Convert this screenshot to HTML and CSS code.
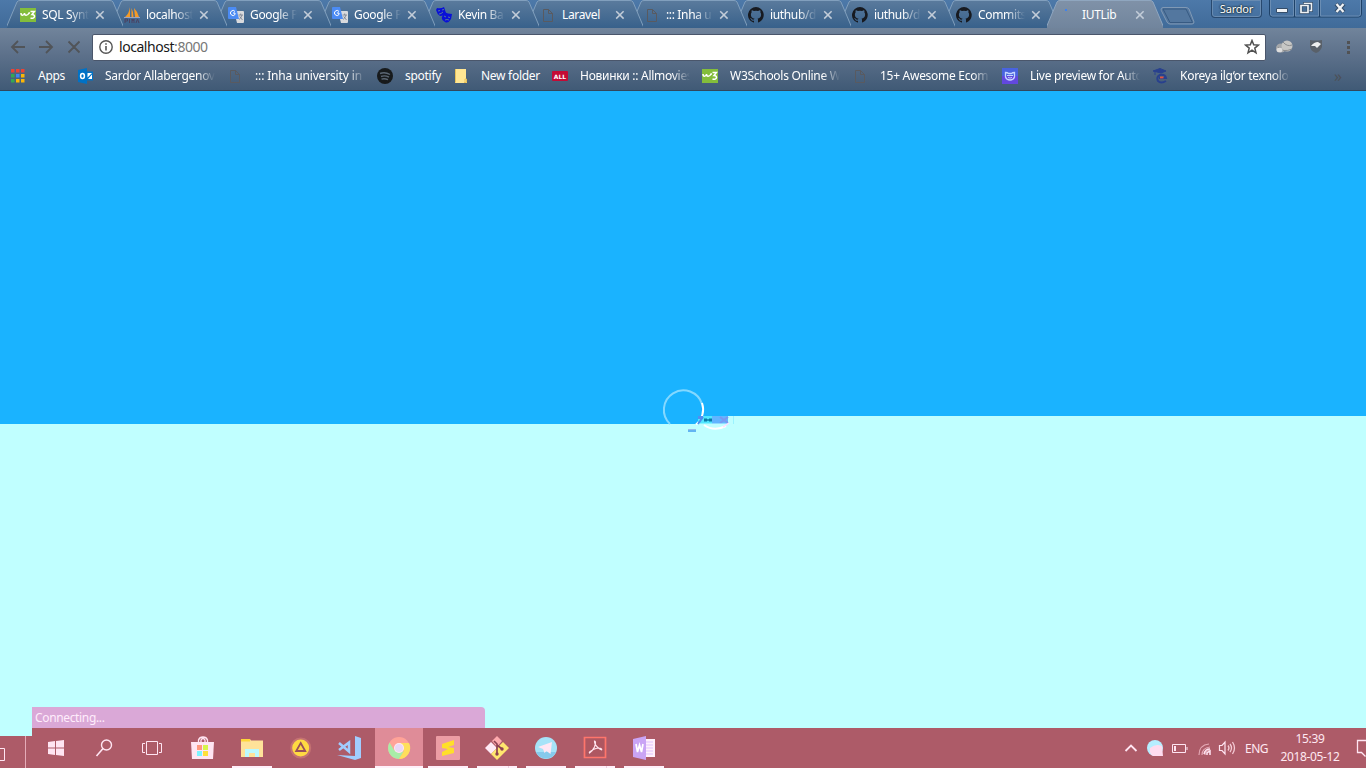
FILE: index.html
```html
<!DOCTYPE html>
<html lang="en">
<head>
<meta charset="utf-8">
<title>IUTLib</title>
<link rel="stylesheet" href="styles.css">
</head>
<body>
<svg class="defs" width="0" height="0">
  <symbol id="tab" viewBox="0 0 116 28"><path d="M-1 28L10 2Q11 0 13 0H103Q105 0 106 2L117 28Z" fill="url(#tabfill)"/><path d="M-1 28L10 2Q11 .5 13 .5H103Q105 .5 106 2L117 28" fill="none" stroke="#819fbd" stroke-width="1"/></symbol>
  <linearGradient id="tabfill" x2="0" y2="1"><stop stop-color="#5b7b9d"/><stop offset="1" stop-color="#38618b"/></linearGradient>
  <linearGradient id="activefill" x2="0" y2="1"><stop stop-color="#8092a8"/><stop offset="1" stop-color="#71859d"/></linearGradient>
  <symbol id="w3" viewBox="0 0 16 16"><path fill="#83bd3b" d="M0 1h16v14H0z"/><path d="M1 6c0 3 3 3 3.500 0c0 3 3 3 4.500 0H10M10.500 4.500h4L12 7.500c4 0 3 5-1.500 3.500" fill="none" stroke="#fff" stroke-width="1.500"/></symbol>
  <symbol id="page" viewBox="0 0 16 16"><path d="M3.500 2.500h5l4 4v8h-9zM8.500 2.500v4h4" fill="none" stroke="#595a60"/></symbol>
  <symbol id="translate" viewBox="0 0 16 16"><path d="M6 4h9q1 0 1 1v10q0 1-1 1H9z" fill="#d9dadd"/><path d="M1 0h7l3 12H1q-1 0-1-1V1q0-1 1-1z" fill="#4b8bf4"/><path d="M7 4.500A2.500 2.500 0 1 0 7 7.500V6H5" stroke="#fff" fill="none"/><path d="M10.500 8H15M12.700 6.500V8M14 8q-1 3.500-3 4.500M11.700 9.500l2.800 3.500" stroke="#737c8c" stroke-width=".8" fill="none"/></symbol>
  <symbol id="github" viewBox="0 0 16 16"><path fill="#171a20" d="M8 0a8 8 0 0 0-2.500 15.600c.4.100.500-.2.500-.4v-1.500c-2.200.5-2.700-1-2.700-1-.4-.9-.9-1.200-.9-1.200-.7-.5.100-.5.100-.5.800.1 1.200.8 1.200.8.700 1.200 1.900.9 2.300.7.100-.5.300-.9.500-1.100-1.800-.2-3.600-.9-3.600-4 0-.9.300-1.600.8-2.100-.1-.2-.4-1 .1-2.100 0 0 .7-.2 2.200.8a7.700 7.700 0 0 1 4 0c1.500-1 2.200-.8 2.200-.8.500 1.100.2 1.900.1 2.100.5.500.8 1.200.8 2.100 0 3.100-1.900 3.800-3.600 4 .3.300.5.800.5 1.500v2.200c0 .2.100.5.500.4A8 8 0 0 0 8 0z"/></symbol>
  <symbol id="x" viewBox="0 0 10 10"><path d="M1.200 1.200l7.400 7.400M8.600 1.200L1.200 8.600" stroke="#c2ccd8" stroke-width="1.500"/></symbol>
</svg>

<header class="tabstrip">
  <div class="tabs">
    <div class="tab"><svg class="shape"><use href="#tab"/></svg><svg class="fav"><use href="#w3"/></svg><span class="title">SQL Synt</span><svg class="close"><use href="#x"/></svg></div>
    <div class="tab"><svg class="shape"><use href="#tab"/></svg><svg class="fav" viewBox="0 0 16 16"><path d="M6 0v10H1Q5 7 6 0zM7.500 1q2 4 2 9h-2zM10 1q4 4 5 9h-4z" fill="#f49a27"/><path d="M0 10.500h16" stroke="#9ca4c0"/><path d="M1 16v-4h2.500v2H1M5.500 16v-4m2.500 4v-4l1 2 1-2v4m2 0 1.500-4 1.500 4" fill="none" stroke="#4a4262"/></svg><span class="title">localhost</span><svg class="close"><use href="#x"/></svg></div>
    <div class="tab"><svg class="shape"><use href="#tab"/></svg><svg class="fav"><use href="#translate"/></svg><span class="title">Google P</span><svg class="close"><use href="#x"/></svg></div>
    <div class="tab"><svg class="shape"><use href="#tab"/></svg><svg class="fav"><use href="#translate"/></svg><span class="title">Google P</span><svg class="close"><use href="#x"/></svg></div>
    <div class="tab"><svg class="shape"><use href="#tab"/></svg><svg class="fav" viewBox="0 0 16 16"><path d="M1 1q4 1 7-1l2 6q-2 3-6 3Q1 7 0 3z" fill="#0910d7"/><path d="M8 5q4 2 8 2l-1 5q-3 5-6 3-4-2-3-5z" fill="#0910d7"/><path d="M2 4l2-.5M6 3l2-.5M3 7q2 0 4-2M8 9l2 1M12 10l2 .5M9 13q2-1 4 0" stroke="#5375a0" fill="none"/></svg><span class="title">Kevin Ba</span><svg class="close"><use href="#x"/></svg></div>
    <div class="tab"><svg class="shape"><use href="#tab"/></svg><svg class="fav"><use href="#page"/></svg><span class="title full">Laravel</span><svg class="close"><use href="#x"/></svg></div>
    <div class="tab"><svg class="shape"><use href="#tab"/></svg><svg class="fav"><use href="#page"/></svg><span class="title">::: Inha u</span><svg class="close"><use href="#x"/></svg></div>
    <div class="tab"><svg class="shape"><use href="#tab"/></svg><svg class="fav"><use href="#github"/></svg><span class="title">iuthub/d</span><svg class="close"><use href="#x"/></svg></div>
    <div class="tab"><svg class="shape"><use href="#tab"/></svg><svg class="fav"><use href="#github"/></svg><span class="title">iuthub/d</span><svg class="close"><use href="#x"/></svg></div>
    <div class="tab"><svg class="shape"><use href="#tab"/></svg><svg class="fav"><use href="#github"/></svg><span class="title">Commits</span><svg class="close"><use href="#x"/></svg></div>
    <div class="tab active"><svg class="shape" viewBox="0 0 116 28"><path d="M-1 28L10 2Q11 0 13 0H103Q105 0 106 2L117 28Z" fill="url(#activefill)"/><path d="M-1 28L10 2Q11 .5 13 .5H103Q105 .5 106 2L117 28" fill="none" stroke="#8fa6bf"/></svg><svg class="fav" viewBox="0 0 16 16"><path d="M5 2h2v2H5z" fill="#3e82ed"/></svg><span class="title full">IUTLib</span><svg class="close"><use href="#x"/></svg></div>
  </div>
  <svg class="newtab" width="36" height="18" viewBox="0 0 36 18"><path d="M3 .5H26Q28 .5 29 2L34 15Q34 17 32 17H10Q8 17 7 15L1 3Q1 .5 3 .5Z" fill="#53779f" stroke="#8099b5"/><path d="M3 2H26L32.500 15.500H10Z" fill="none" stroke="#375a82"/></svg>
  <div class="user">Sardor</div>
  <div class="window-buttons">
    <svg width="97" height="18" viewBox="0 0 97 18"><path d="M.5 0v14q0 3 3 3h86q3 0 3-3V0M25.500 0v17M50.500 0v17" fill="none" stroke="#1e4269"/><path d="M1.500 0v14q0 2 2 2h21V0M26.500 0v16h23V0M51.500 0v16h38q2 0 2-2V0" fill="none" stroke="#6a8db3"/><path d="M7.500 8.500h11v4h-11z" fill="#eff2f5" stroke="#344d69"/><path d="M35.500 3.500h7v7h-7z" fill="none" stroke="#344d69" stroke-width="3"/><path d="M35.500 3.500h7v7h-7z" fill="none" stroke="#eff2f5" stroke-width="1.500"/><path d="M32 5.500h7v7h-7z" fill="#456d97" stroke="#344d69" stroke-width="3"/><path d="M32 5.500h7v7h-7z" fill="none" stroke="#eff2f5" stroke-width="1.700"/><path d="M67 4l8 8M75 4l-8 8" stroke="#344d69" stroke-width="4"/><path d="M67.500 4l7 8M74.500 4l-7 8" stroke="#eff2f5" stroke-width="2.300"/></svg>
  </div>
</header>

<section class="chrome">
  <div class="toolbar">
    <svg class="nav" width="83" height="20" viewBox="0 0 83 20"><path d="M25 10H12M18 4l-6 6 6 6M39 10h13M46 4l6 6-6 6M68.500 4.500l11 11M79.500 4.500l-11 11" fill="none" stroke="#515458" stroke-width="1.800"/></svg>
    <div class="address">
      <svg width="14" height="14" viewBox="0 0 14 14"><circle cx="7" cy="7" r="6.200" fill="none" stroke="#555" stroke-width="1.400"/><path d="M7 6v4.500M7 3.300v1.500" stroke="#555" stroke-width="1.600"/></svg>
      <span class="url">localhost<span class="port">:8000</span></span>
      <svg class="star" width="16" height="16" viewBox="0 0 16 16"><path d="M8 1.500l1.700 4.300 4.800.3-3.700 3 1.200 4.700L8 11.200l-4 2.600 1.200-4.700-3.700-3 4.800-.3z" fill="none" stroke="#505050" stroke-width="1.500"/></svg>
    </div>
    <svg class="extensions" width="100" height="20" viewBox="0 0 100 20"><ellipse cx="15" cy="11" rx="5" ry="4.500" fill="#a5a7aa"/><circle cx="21" cy="9" r="5.500" fill="#c7c7c5"/><path d="M12 10q5 6 14 2M17 5q4 5 9 3" fill="none" stroke="#8b8c8e"/><ellipse cx="13.500" cy="13" rx="3" ry="2.300" fill="#ddd"/><path d="M44 3q6 1 12 0v7q-2 5-6 6-6-2-6-7z" fill="#596069"/><path d="M45 9q3-4 7-4l3 2-4 4-2-2z" fill="#eee"/><path d="M81 4h3v3h-3zm0 5h3v3h-3zm0 5h3v3h-3z" fill="#515254"/></svg>
  </div>
  <nav class="bookmarks">
    <div class="bm apps"><svg viewBox="0 0 16 16"><path d="M1 1h3.500v3.500H1zm5 0h3.500v3.500H6zm5 0h3.500v3.500H11z" fill="#ea4335"/><path d="M1 6h3.500v3.500H1z" fill="#35a853"/><path d="M6 6h3.500v3.500H6z" fill="#4285f4"/><path d="M11 6h3.500v3.500H11zM6 11h3.500v3.500H6zm5 0h3.500v3.500H11z" fill="#fbb605"/><path d="M1 11h3.500v3.500H1z" fill="#35a853"/></svg><span class="full">Apps</span></div>
    <div class="bm"><svg viewBox="0 0 16 16"><path d="M9 3.500h7v9H9z" fill="#0072c6"/><path d="M10.500 5H15l-4.500 4.500zM11 11l4-4.500V11z" fill="#fff"/><path d="M1 2l9-2v16l-9-2z" fill="#0072c6"/><ellipse cx="5.500" cy="8" rx="1.900" ry="2.500" fill="none" stroke="#fff" stroke-width="1.500"/></svg><span>Sardor Allabergenov</span></div>
    <div class="bm"><svg><use href="#page"/></svg><span class="wide">::: Inha university in t</span></div>
    <div class="bm spotify"><svg viewBox="0 0 16 16"><circle cx="8" cy="8" r="8" fill="#171a1c"/><path d="M3 5.500q5-2 10 1M4 8.500q4-1.500 8 .7M4.500 11.200q3-1 6.500.5" fill="none" stroke="#5c6774" stroke-width="1.400"/></svg><span class="full">spotify</span></div>
    <div class="bm folder"><svg viewBox="0 0 16 16"><path d="M2 1h11v10h1v4H2z" fill="#ffe693"/><path d="M2.500 1v13.500M12 15v-4h1.500v3.500H11" fill="none" stroke="#e8c25a"/></svg><span class="full">New folder</span></div>
    <div class="bm"><svg viewBox="0 0 16 16"><rect y="3" width="16" height="10" rx="1" fill="#c40b35"/><text x="8" y="10.500" class="all">ALL</text></svg><span>Новинки :: Allmovies</span></div>
    <div class="bm"><svg><use href="#w3"/></svg><span>W3Schools Online W</span></div>
    <div class="bm"><svg><use href="#page"/></svg><span>15+ Awesome Ecom</span></div>
    <div class="bm"><svg viewBox="0 0 16 16"><path d="M0 0h16v8H0z" fill="#4963df"/><path d="M0 8h16v8H0z" fill="#6248df"/><path d="M3.500 4.500q2 0 3 1h3q1-1 3-1V9q-1 3-4.500 3T3.500 9z" fill="none" stroke="#c6d6ff" stroke-width="1.300"/><path d="M5 7.500h6M6 9.500q2 1 4 0" stroke="#c6d6ff" fill="none"/></svg><span>Live preview for Auto</span></div>
    <div class="bm"><svg viewBox="0 0 16 16"><path d="M1 3l7-2.500L14 3 9 5zM3 4v3" fill="#28408e" stroke="#28408e"/><path d="M14 13q-5 3-8 0-2-4 2-6 5-1 6 3H7" fill="none" stroke="#28408e" stroke-width="2"/><path d="M8 9.500h3.500" stroke="#e7513e" stroke-width="1.800"/></svg><span>Koreya ilg‘or texnolo</span></div>
    <div class="more">»</div>
  </nav>
</section>

<main class="page">
  <div class="sky-left"></div><div class="sky-right"></div>
  <svg class="spinner" width="84" height="50" viewBox="0 0 84 50"><path d="M10 37A19.500 19.500 0 1 1 42 17" fill="none" stroke="#83d8ff" stroke-width="2"/><path d="M42 16A19.500 19.500 0 0 1 36 37.500" fill="none" stroke="#fff" stroke-width="2"/><path d="M38 29h14v8H38z" fill="#50e7ff"/><path d="M38 29h5v3h-5z" fill="#558cf0"/><path d="M38 37l5-7" stroke="#4f8cef" stroke-width="2"/><path d="M44 33h3m2 0h3" fill="none" stroke="#087da9" stroke-width="3"/><path d="M47 33h2" stroke="#087da9" stroke-width="1.500"/><path d="M52 29h16v8H52z" fill="#62b5ff"/><path d="M60 30l8 6m0-6l-8 6" stroke="#7b98f0" stroke-width="2"/><path d="M39 36.500h31v3H42z" fill="#c0ffff"/><path d="M44 38Q54 45 66 39" stroke="#fff" stroke-width="2" fill="none"/><path d="M63 40l6-4" stroke="#ffddff" stroke-width="1.500"/><path d="M28 42h8v3h-8z" fill="#62b5f2"/><path d="M28 42.500h8" stroke="#9abdea"/><path d="M73.500 29v8" stroke="#9bf3ff"/></svg>
  <div class="status">Connecting...</div>
</main>

<footer class="taskbar">
  <div class="left-edge"><svg width="32" height="32" viewBox="0 0 32 32"><path d="M0 12.500h4.500v12H0" fill="none" stroke="#ffe5f2"/><path d="M25.500 0v32" stroke="#e5acb8"/></svg></div>
  <div class="apps-row">
    <div class="slot"><svg viewBox="0 0 24 24"><path d="M4 6l7-1v6.500H4zM12 5l8-1v7.500h-8zM4 12.500h7V19l-7-1zM12 12.500h8V20l-8-1z" fill="#ffe5f2"/></svg></div>
    <div class="slot"><svg viewBox="0 0 24 24"><circle cx="13.500" cy="9" r="5" fill="none" stroke="#ffe5f2" stroke-width="1.400"/><path d="M10 12.500L3.500 20" stroke="#ffe5f2" stroke-width="1.600"/></svg></div>
    <div class="slot"><svg viewBox="0 0 24 24"><path d="M4.500 5.500h11v13h-11zM3 7.500H.5v9H3M17 7.500h2.500v9H17" fill="none" stroke="#ffe5f2"/></svg></div>
    <div class="slot"><svg viewBox="0 0 24 24"><path d="M0 6h23l-1 17H1z" fill="#ffe5f2"/><path d="M7.500 7V4q1-3 4.500-3t4.500 3v3M10 7V4q2-3 4 0v3" fill="none" stroke="#ffe5f2" stroke-width="1.300"/><path d="M6 9h5v5H6z" fill="#ff987e"/><path d="M12 9h5v5h-5z" fill="#d7f44a"/><path d="M6 15h5v5H6z" fill="#7df3ff"/><path d="M12 15h5v5h-5z" fill="#ffe039"/></svg></div>
    <div class="slot open"><svg viewBox="0 0 24 24"><path d="M1 3h9l1 1.500h12V21H1z" fill="#ffe299"/><path d="M1 3h9v2.500H1z" fill="#ffd638"/><path d="M5 13h14v8h-4v-4H9v4H5z" fill="#bcf9ff"/></svg></div>
    <div class="slot"><svg viewBox="0 0 24 24"><circle cx="11.700" cy="12" r="9.500" fill="#ffda42" stroke="#c47272" stroke-width="2"/><path d="M11.700 7l4.500 8h-9z" fill="none" stroke="#98505b" stroke-width="1.800"/></svg></div>
    <div class="slot"><svg viewBox="0 0 24 24"><path d="M17 0l6 2v20l-6 2-18-5 18 1z" fill="#a1cdff"/><path d="M1 7l10 8.500v-9L1 14" fill="none" stroke="#a1cdff" stroke-width="2.500"/></svg></div>
    <div class="slot current"><svg viewBox="0 0 24 24"><circle cx="12" cy="12" r="11" fill="#ffa398"/><path d="M2.500 6.500A11 11 0 0 0 12 23l5-8-5 2-5-3z" fill="#a9eda8"/><path d="M12 7h10A11 11 0 0 1 12 23l5-8z" fill="#ffdf5c"/><circle cx="12" cy="12" r="5" fill="#ffe9f3"/><circle cx="12" cy="12" r="4" fill="#ead7f6"/></svg></div>
    <div class="slot open"><svg viewBox="0 0 24 24"><rect width="24" height="24" rx="1" fill="#ec9da4"/><path d="M6 8l12-4v5l-6 2 6 1v5L6 20v-4l6-3-6-1z" fill="#ffdf29"/></svg></div>
    <div class="slot open split"><svg viewBox="0 0 24 24"><path d="M12 0l5 5-5 6-5-6z" fill="#ffaaae"/><path d="M6 6l6 6-6 6-6-6z" fill="#ffe9f5"/><path d="M18 6l6 6-12 12-6-6 6-6z" fill="#ffe56e"/><path d="M9 5l3 3v10M12 9l5 4" stroke="#8d4052" stroke-width="1.700" fill="none"/><circle cx="12" cy="18" r="1.700" fill="#8d4052"/><circle cx="17" cy="13" r="1.700" fill="#8d4052"/></svg></div>
    <div class="slot open"><svg viewBox="0 0 24 24"><circle cx="12" cy="12" r="11" fill="#a6e3f8"/><path d="M2 16a11 11 0 0 0 20 0z" fill="#86caec"/><path d="M4 11l14-5-1.500 12-4-3-2 2-1.500-4z" fill="#ffe7f4"/></svg></div>
    <div class="slot open split"><svg viewBox="0 0 24 24"><path d="M1.500 1.500h21v20h-21z" fill="#ae5761" stroke="#ff756b" stroke-width="1.700"/><path d="M11.500 5q2 0 0 6-2 4-5 6-1-1 5-4 5-2 7 0 1 2-3-1-4-3-4-7z" fill="none" stroke="#ffe4ed" stroke-width="1.200"/></svg></div>
    <div class="slot open"><svg viewBox="0 0 24 24"><path d="M12 3h11v18H12z" fill="#fff0fc"/><path d="M14 6h7M14 9h7M14 12h7M14 15h7M14 18h7" stroke="#dfc3ff"/><path d="M1 3l13-3v24L1 21z" fill="#caa4f5"/><path d="M4 8l1.500 8L7.500 9l2 7L11 8" fill="none" stroke="#fff" stroke-width="1.700"/></svg></div>
  </div>
  <div class="tray">
    <svg width="120" height="24" viewBox="0 0 120 24"><path d="M5.500 15l5.500-5.500L16.500 15" fill="none" stroke="#ffe5f2" stroke-width="1.800"/><circle cx="35" cy="12" r="8" fill="#b6eeff"/><path d="M30 12q6-5 12-2l1 10H33q-4-2-3-8z" fill="#ffdcef"/><path d="M52.500 8.500h13v8h-13zM67 11v3" fill="none" stroke="#ffe5f2"/><path d="M54 10h2v5h-2z" fill="#ffe5f2"/><path d="M79 19Q79 9 89 8M82 19q0-7 8-8M85 19q0-4 5-5" fill="none" stroke="#e5a9b5" stroke-width="1.200"/><path d="M84 18q1-5 6-5M87 19v-2l3-2v4" fill="none" stroke="#ffe5f2" stroke-width="1.500"/><path d="M99.500 9.500h2.500l3-3.500v12l-3-3.500h-2.500z" fill="none" stroke="#ffe5f2" stroke-width="1.200"/><path d="M108 9.500q2 2.500 0 5M110 8q3 4 0 8M112.500 6q4 6 0 12" fill="none" stroke="#f5cbd5" stroke-width="1.300"/></svg>
    <span class="lang">ENG</span>
    <div class="clock"><span>15:39</span><span class="date">2018-05-12</span></div>
    <svg class="notice" width="10" height="20" viewBox="0 0 10 20"><path d="M10 2.500H1.500v12h4l4 4" fill="none" stroke="#ffe5f2" stroke-width="1.300"/></svg>
  </div>
</footer>
</body>
</html>
```
FILE: styles.css
```css
* { box-sizing: border-box; }
body { margin: 0; width: 1366px; height: 768px; overflow: hidden; display: flex; flex-direction: column; font: 12px "Noto Sans", "Open Sans", sans-serif; background: #c0ffff; }
.defs { position: absolute; }
svg { display: block; flex: none; }

.tabstrip { height: 28px; flex: none; display: flex; align-items: flex-start; background: linear-gradient(#4d79a9, #406b99); }
.tabs { display: flex; padding-left: 7px; width: 1160px; flex: none; }
.tab { position: relative; width: 116px; height: 28px; flex: none; margin-right: -12px; padding-left: 13px; display: flex; align-items: center; isolation: isolate; }
.tab:nth-child(1) { z-index: 10; }
.tab:nth-child(2) { z-index: 9; }
.tab:nth-child(3) { z-index: 8; }
.tab:nth-child(4) { z-index: 7; }
.tab:nth-child(5) { z-index: 6; }
.tab:nth-child(6) { z-index: 5; }
.tab:nth-child(7) { z-index: 4; }
.tab:nth-child(8) { z-index: 3; }
.tab:nth-child(9) { z-index: 2; }
.tab:nth-child(10) { z-index: 1; }
.tab.active { z-index: 12; }
.shape { position: absolute; inset: 0; width: 116px; height: 28px; z-index: -1; }
.fav { width: 16px; height: 16px; margin-top: 2px; }
.title { width: 47px; margin: 2px 6px 0; line-height: 18px; white-space: nowrap; color: #fff; letter-spacing: -.35px; mask-image: linear-gradient(90deg, #000 60%, transparent); }
.title.full { mask-image: none; }
.close { width: 10px; height: 10px; margin-top: 2px; }
.newtab { margin-top: 7px; }
.user { width: 51px; height: 18px; margin-left: 15px; border: 1px solid #28496f; border-top: 0; border-radius: 0 0 4px 4px; box-shadow: inset 0 0 0 1px #688bb1; color: #fff; text-shadow: 0 0 2px #122, 0 0 2px #122; text-align: center; font-size: 11px; letter-spacing: -.2px; line-height: 18px; }
.window-buttons { margin-left: 7px; }

.chrome { height: 63px; flex: none; background: linear-gradient(#71849b, #5c708a 45%, #405a76); border-bottom: 1px solid #31485f; }
.toolbar { height: 38px; display: flex; align-items: center; }
.nav { margin-right: 9px; }
.address { width: 1174px; height: 27px; display: flex; align-items: center; padding: 0 5px 0 6px; background: #fff; border: 1px solid #4a566b; border-radius: 2px; }
.url { margin-left: 6px; flex: 1; font-size: 14px; line-height: 20px; color: #171717; letter-spacing: -.45px; }
.port { color: #777; }
.bookmarks { height: 20px; display: flex; align-items: center; padding-left: 10px; }
.bm { width: 150px; flex: none; display: flex; align-items: center; gap: 12px; }
.bm svg { width: 16px; height: 16px; }
.bm > span { width: 110px; white-space: nowrap; line-height: 18px; color: #fff; letter-spacing: -.28px; mask-image: linear-gradient(90deg, #000 84%, transparent); }
.bm > span.wide { letter-spacing: -.15px; }
.bm > span.full { mask-image: none; width: auto; }
.bm.apps { width: 67px; }
.bm.spotify { width: 76px; }
.bm.folder { width: 99px; }
.all { font: bold 6px "DejaVu Sans", sans-serif; fill: #fff; text-anchor: middle; }
.more { width: 20px; margin-left: 32px; color: #4c5158; font-size: 16px; line-height: 16px; }

.page { position: relative; height: 637px; flex: none; display: flex; align-items: flex-start; background: #c0ffff; }
.sky-left { width: 698px; height: 333px; background: #1ab3ff; }
.sky-right { width: 668px; height: 325px; background: #1ab3ff; }
.spinner { position: absolute; left: 660px; top: 296px; }
.status { position: absolute; left: 32px; bottom: 0; width: 453px; height: 21px; padding-left: 3px; background: #daa8d7; border-radius: 0 4px 0 0; color: #ffedfc; line-height: 21px; letter-spacing: -.35px; }

.taskbar { height: 40px; flex: none; display: flex; background: #ad5b68; color: #ffe9f2; }
.left-edge { width: 32px; height: 40px; border-top: 8px solid #c0ffff; }
.apps-row { display: flex; gap: 1px; width: 1088px; }
.slot { width: 48px; height: 40px; flex: none; display: flex; justify-content: center; align-items: center; }
.slot svg { width: 24px; height: 24px; overflow: visible; }
.open { background: linear-gradient(#fff0fa, #fff0fa) 4px 38px / 40px 2px no-repeat; }
.open.split { background: linear-gradient(90deg, #fff0fa 31px, #ead0e0 31px 32px, #fff0fa 32px) 4px 38px / 40px 2px no-repeat; }
.current { background: #df8c98; border-bottom: 2px solid #fff0fa; padding-top: 2px; }
.tray { display: flex; align-items: center; width: 246px; flex: none; }
.lang { margin-left: 5px; width: 25px; letter-spacing: -.5px; }
.clock { width: 78px; margin-left: 1px; display: flex; flex-direction: column; align-items: center; line-height: 18px; letter-spacing: -.35px; }
.notice { margin-left: 7px; }
```
